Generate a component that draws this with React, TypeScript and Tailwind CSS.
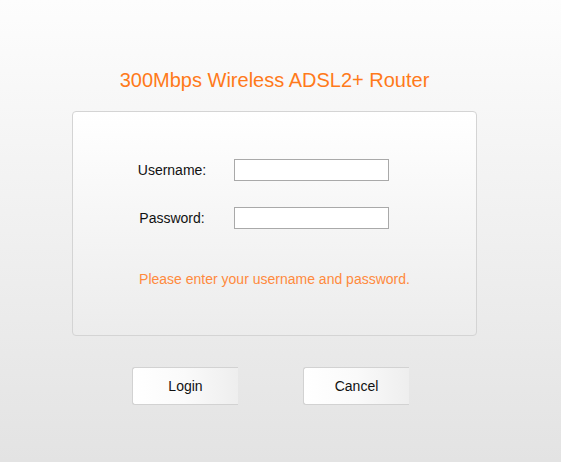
export default function App() {
  return (
    <div className="min-h-[462px] w-full bg-gradient-to-b from-[#fdfdfd] to-[#e3e3e3] font-['Liberation_Sans',Arial,sans-serif]">
      <div className="w-[549px] flex flex-col items-center">
        <h1 className="pt-[68px] text-[20px] leading-[24px] text-[#ff7a1a] text-center">
          300Mbps Wireless ADSL2+ Router
        </h1>

        {/* Login panel */}
        <div className="mt-[19px] w-[405px] h-[225px] border border-[#d4d4d4] rounded-[4px] bg-gradient-to-b from-white to-[#ececec] pt-[47px]">
          <div className="flex items-center h-[22px]">
            <label className="ml-[49px] w-[100px] text-center text-[14px] leading-[16px] text-[#111]">Username:</label>
            <input type="text" className="ml-[12px] w-[155px] h-[22px] border border-[#a9a9a9] bg-white outline-none" />
          </div>
          <div className="flex items-center h-[22px] mt-[26px]">
            <label className="ml-[49px] w-[100px] text-center text-[14px] leading-[16px] text-[#111]">Password:</label>
            <input type="password" className="ml-[12px] w-[155px] h-[22px] border border-[#a9a9a9] bg-white outline-none" />
          </div>
          <p className="mt-[42px] text-center text-[14px] leading-[16px] text-[#ff8a3d]">
            Please enter your username and password.
          </p>
        </div>

        {/* Buttons */}
        <div className="mt-[31px] w-full flex">
          <button className="ml-[132px] w-[106px] h-[38px] rounded-l-[3px] border-y border-l border-[#d2d2d2] bg-gradient-to-r from-white via-[#fafafa] to-[#eeeeee] text-[14px] text-[#111]">
            Login
          </button>
          <button className="ml-[65px] w-[106px] h-[38px] rounded-l-[3px] border-y border-l border-[#d2d2d2] bg-gradient-to-r from-white via-[#fafafa] to-[#eeeeee] text-[14px] text-[#111]">
            Cancel
          </button>
        </div>
      </div>
    </div>
  )
}
